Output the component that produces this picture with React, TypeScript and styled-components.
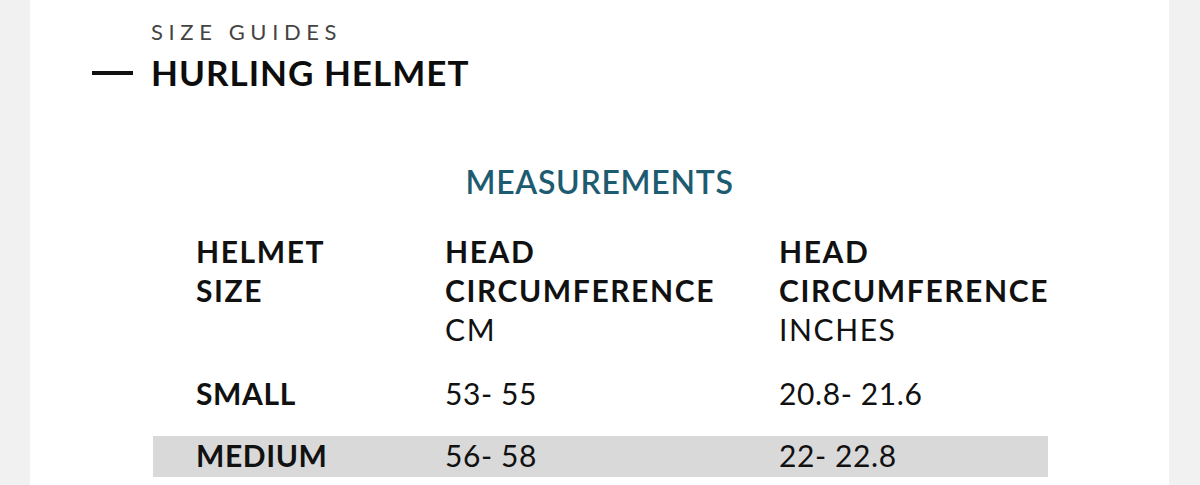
import React from 'react';
import styled, { createGlobalStyle } from 'styled-components';

const GlobalStyle = createGlobalStyle`
  html, body { margin: 0; padding: 0; }
  body {
    background: #f1f1f1;
    font-family: Lato, "Open Sans", "Liberation Sans", sans-serif;
    color: #111;
  }
`;

const Panel = styled.main`
  margin: 0 31px 0 30px;
  min-height: 485px;
  background: #fff;
  padding-top: 19px;
  box-sizing: border-box;
`;

const Header = styled.header`
  padding-left: 62px;
`;

const Eyebrow = styled.div`
  margin-left: 59px;
  font-size: 22px;
  line-height: 26px;
  letter-spacing: 5.6px;
  color: #444;
`;

const TitleRow = styled.div`
  display: flex;
  align-items: center;
  gap: 18px;
  margin-top: 7px;
`;

const Dash = styled.span`
  width: 41px;
  height: 4px;
  margin-top: 2px;
  background: #111;
`;

const Title = styled.h1`
  margin: 0;
  font-size: 35px;
  line-height: 40px;
  font-weight: 700;
  letter-spacing: 1px;
  color: #0d0d0d;
`;

const SectionTitle = styled.h2`
  margin: 70px 0 0;
  text-align: center;
  font-size: 32px;
  line-height: 40px;
  font-weight: 600;
  letter-spacing: 0.7px;
  color: #1d5c70;
`;

const Table = styled.div`
  margin: 30px 0 0 123px;
  width: 895px;
`;

const Row = styled.div<{ $shaded?: boolean; $head?: boolean }>`
  display: grid;
  grid-template-columns: 249px 334px 1fr;
  padding-left: 43px;
  padding-top: ${p => (p.$head ? '0' : '1px')};
  padding-bottom: ${p => (p.$head ? '0' : '4px')};
  margin-top: ${p => (p.$head ? '0' : '21px')};
  background: ${p => (p.$shaded ? '#d9d9d9' : 'transparent')};
  font-size: 30px;
  line-height: ${p => (p.$head ? '39px' : '36px')};
  letter-spacing: ${p => (p.$head ? '1.6px' : '0.6px')};
  &:nth-child(2) { margin-top: 25px; }
`;

const Cell = styled.div<{ $bold?: boolean }>`
  font-weight: ${p => (p.$bold ? 700 : 400)};
`;

const Unit = styled.span`
  display: block;
  font-weight: 400;
`;

const rows = [
  { size: 'SMALL', cm: '53- 55', inches: '20.8- 21.6' },
  { size: 'MEDIUM', cm: '56- 58', inches: '22- 22.8' },
];

export default function App() {
  return (
    <>
      <GlobalStyle />
      <Panel>
        <Header>
          <Eyebrow>SIZE GUIDES</Eyebrow>
          <TitleRow>
            <Dash />
            <Title>HURLING HELMET</Title>
          </TitleRow>
        </Header>
        <SectionTitle>MEASUREMENTS</SectionTitle>
        <Table>
          <Row $head>
            <Cell $bold>HELMET<br />SIZE</Cell>
            <Cell $bold>HEAD<br />CIRCUMFERENCE<Unit>CM</Unit></Cell>
            <Cell $bold>HEAD<br />CIRCUMFERENCE<Unit>INCHES</Unit></Cell>
          </Row>
          {rows.map((r, i) => (
            <Row key={r.size} $shaded={i % 2 === 1}>
              <Cell $bold>{r.size}</Cell>
              <Cell>{r.cm}</Cell>
              <Cell>{r.inches}</Cell>
            </Row>
          ))}
        </Table>
      </Panel>
    </>
  );
}
